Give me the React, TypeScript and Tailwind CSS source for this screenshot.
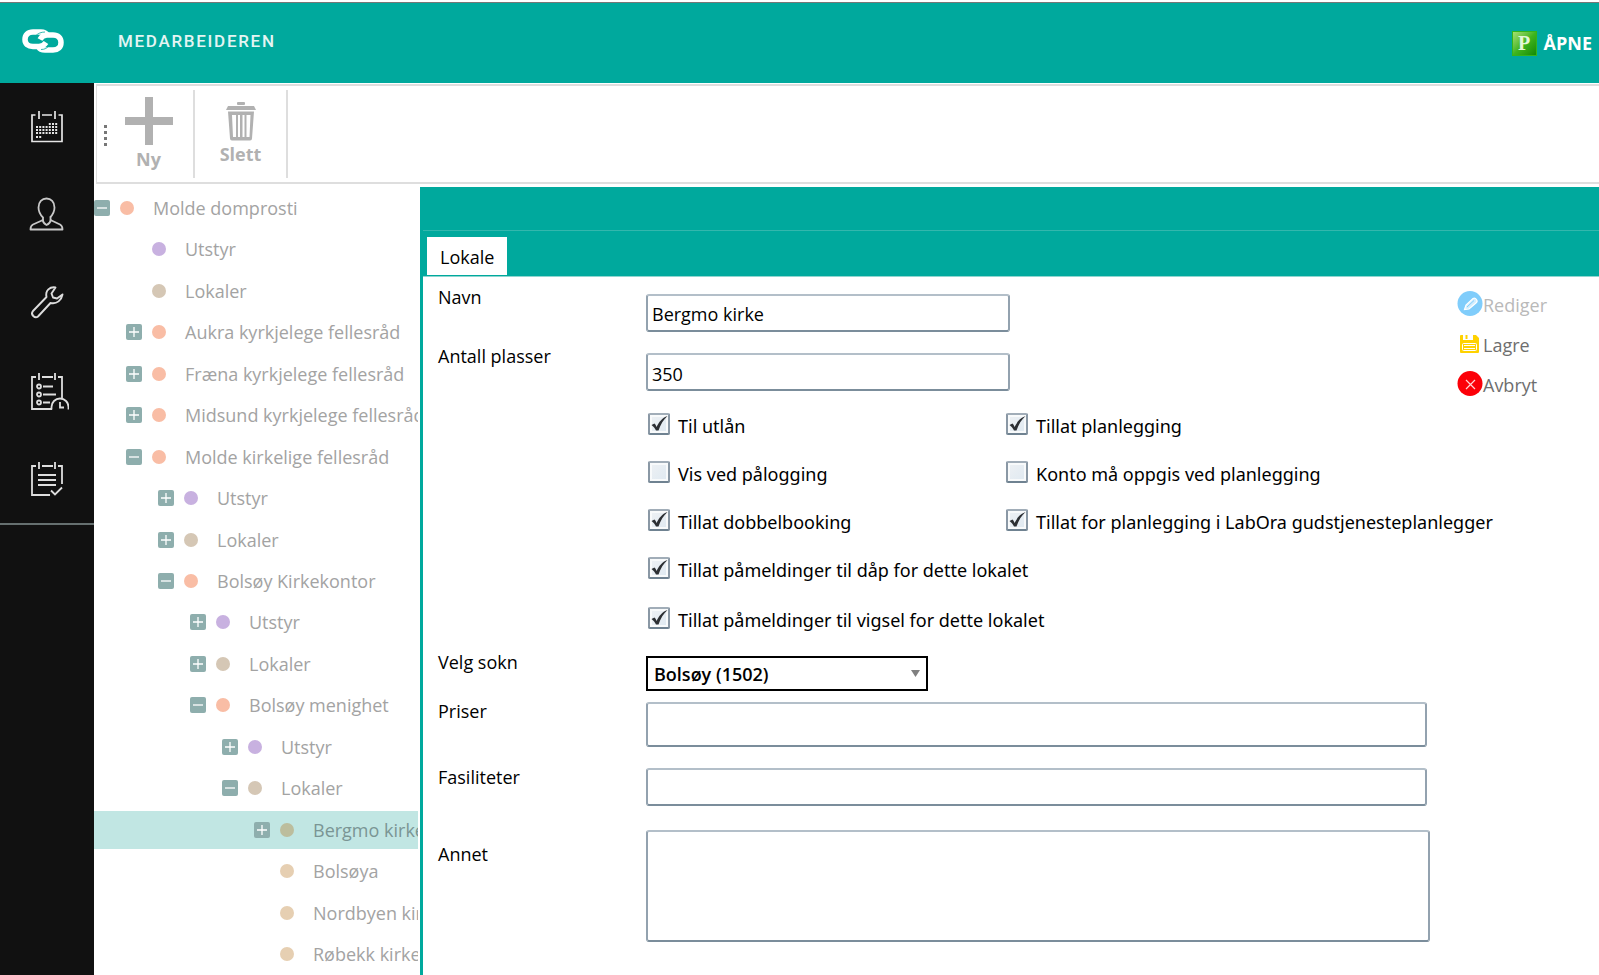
import { useState, type ReactNode } from "react";

type Kind = "office" | "equipment" | "room" | "place" | "active";

interface TreeNode {
    label: string;
    level: number;
    kind: Kind;
    expander?: "plus" | "minus";
}

const nodes: TreeNode[] = [
    { label: "Molde domprosti", level: 0, kind: "office", expander: "minus" },
    { label: "Utstyr", level: 1, kind: "equipment" },
    { label: "Lokaler", level: 1, kind: "room" },
    { label: "Aukra kyrkjelege fellesråd", level: 1, kind: "office", expander: "plus" },
    { label: "Fræna kyrkjelege fellesråd", level: 1, kind: "office", expander: "plus" },
    { label: "Midsund kyrkjelege fellesråd", level: 1, kind: "office", expander: "plus" },
    { label: "Molde kirkelige fellesråd", level: 1, kind: "office", expander: "minus" },
    { label: "Utstyr", level: 2, kind: "equipment", expander: "plus" },
    { label: "Lokaler", level: 2, kind: "room", expander: "plus" },
    { label: "Bolsøy Kirkekontor", level: 2, kind: "office", expander: "minus" },
    { label: "Utstyr", level: 3, kind: "equipment", expander: "plus" },
    { label: "Lokaler", level: 3, kind: "room", expander: "plus" },
    { label: "Bolsøy menighet", level: 3, kind: "office", expander: "minus" },
    { label: "Utstyr", level: 4, kind: "equipment", expander: "plus" },
    { label: "Lokaler", level: 4, kind: "room", expander: "minus" },
    { label: "Bergmo kirke", level: 5, kind: "active", expander: "plus" },
    { label: "Bolsøya", level: 5, kind: "place" },
    { label: "Nordbyen kirkesenter", level: 5, kind: "place" },
    { label: "Røbekk kirke", level: 5, kind: "place" },
];

const dotColors: Record<Kind, string> = {
    office: "bg-[#f9bda5]",
    equipment: "bg-[#c8b1e0]",
    room: "bg-[#d5c7b5]",
    place: "bg-[#e6cfb2]",
    active: "bg-[#bcbd9d]",
};

const inputStyle =
    "block rounded-[3px] border-2 border-t-[#b3bfc9] border-x-[#93a2af] border-b-[#7b8d9b] bg-white px-1 text-black outline-none";

function Logo() {
    return (
        <svg width="42" height="24" viewBox="0 0 42 24" fill="none" stroke="#fff" strokeWidth="5.500">
            <path d="M25 6C24 4 22 3 19 3h-8C6 3 3 6 3 10.500S6 17.500 11 17.500h6c3 0 5-1 7-4" />
            <path d="M17 18.500c1 2 3 2.500 6 2.500h8c5 0 8-3 8-7.500S36 6 31 6h-6c-3 0-5 1-7 4.500" />
            <path d="M14 6.500c2-2 5-3.500 9-3.500M19 20.500c4 0 6-1.500 8.500-4" stroke="#00a99d" strokeWidth="0.800" />
        </svg>
    );
}

function CalendarIcon() {
    const rows = [
        { y: 13, from: 4, to: 6 },
        { y: 16, from: 0, to: 6 },
        { y: 19, from: 0, to: 6 },
        { y: 22, from: 0, to: 6 },
        { y: 26, from: 0, to: 1 },
    ];
    return (
        <svg width="32" height="32" viewBox="0 0 32 32" fill="none" stroke="#e6e6e6" strokeWidth="1.700">
            <path d="M4.500 4H1v26.500h30V4h-3.500M11 4h10M8 0v8M24 0v8" />
            {rows.map((r) =>
                [0, 1, 2, 3, 4, 5, 6]
                    .filter((i) => i >= r.from && i <= r.to)
                    .map((i) => (
                        <rect key={`${r.y}-${i}`} x={5 + i * 3.2} y={r.y - 1} width="2" height="2" fill="#e6e6e6" stroke="none" />
                    ))
            )}
        </svg>
    );
}

function PersonIcon() {
    return (
        <svg width="34" height="34" viewBox="1 0 34 34" className="overflow-visible" fill="none" stroke="#c8c8c8" strokeWidth="1.800" strokeLinejoin="round">
            <path d="M13 19.500c-2.500-2.500-4.500-6-4.500-10C8.500 4 12 .5 16.500.5S24.500 4 24.500 9.500c0 4-2 7.500-4.500 10" />
            <path d="M13 19v3L3 26.500C1 27.500 .5 29 .5 31.500h32c0-2.500-.5-4-2.500-5L20.500 22v-3" />
            <path d="M12.500 21.500c.5 2.500 2 4.500 4 5.500 2.500-1 4-3 4.500-5.500" />
        </svg>
    );
}

function WrenchIcon() {
    return (
        <svg width="34" height="34" viewBox="1 1 34 34" className="overflow-visible" fill="none" stroke="#dcdcdc" strokeWidth="1.900" strokeLinejoin="round">
            <path d="M25.500 2.500c-5.500-1-10.500 3-9 9.500L3 26c-3 3.500 2 8 5 5.500L20.500 18c6.500 1.500 11-3 12-8.500l-5.500 4-4-1-1.500-4z" />
        </svg>
    );
}

function PlanClockIcon() {
    return (
        <svg width="38" height="38" viewBox="0 0 38 38" fill="none" stroke="#dedede" strokeWidth="1.800">
            <path d="M5 5H1v32h20M11 5h11M27 5h4v21M8 1v7M24 1v7" />
            <path d="M12 14.500h10M12 22.500h13M12 30.500h7" />
            <circle cx="8" cy="14.500" r="2" />
            <circle cx="8" cy="22.500" r="2" />
            <circle cx="8" cy="30.500" r="2" />
            <path d="M20.500 37.500v-2.500a8.500 8.500 0 0 1 17 0v2.500M29 30v5.500h4" />
        </svg>
    );
}

function PlanCheckIcon() {
    return (
        <svg width="32" height="36" viewBox="0 0 32 36" fill="none" stroke="#dedede" strokeWidth="1.800">
            <path d="M5 5H1v29h18M11 5h11M27 5h4v18M8 1v7M24 1v7" />
            <path d="M7 14h18M7 19h18M7 24h18" />
            <path d="M20 29.500l4 4 7-7" />
        </svg>
    );
}

function TrashIcon() {
    return (
        <svg width="30" height="40" viewBox="0 0 30 40" fill="#b1b1b1">
            <rect x="11" y="0" width="8" height="3" rx="1" />
            <path d="M2 4h26l2 4H0z" />
            <path
                fillRule="evenodd"
                d="M2 9.500h26l-2 27q0 2-2 2H6q-2 0-2-2zM6 13l1 22h3V13zM12 13v22h2V13zM16.500 13v22h2V13zM20.500 13v22h3l1-22z"
            />
        </svg>
    );
}

const menu = [
    { label: "Kalender", icon: <CalendarIcon /> },
    { label: "Personer", icon: <PersonIcon /> },
    { label: "Verktøy", icon: <WrenchIcon /> },
    { label: "Planlegging", icon: <PlanClockIcon /> },
    { label: "Oppgaver", icon: <PlanCheckIcon /> },
];

function TreeRow({ node }: { node: TreeNode }) {
    const active = node.kind === "active";
    return (
        <li className="flex items-center overflow-hidden">
            <div className={`flex h-[38px] w-full items-center ${active ? "bg-[#c1e6e3] text-[#7a9594]" : "text-[#a3a3a3]"}`}>
                <span className="shrink-0" style={{ width: node.level * 32 }} />
                {node.expander ? (
                    <button aria-label={node.expander === "plus" ? "Utvid" : "Skjul"} className="mr-2.5 size-4 shrink-0 rounded-xs bg-[#8eaead]">
                        <svg width="16" height="16" viewBox="0 0 16 16" stroke="#fff" strokeWidth="1.300">
                            <path d={node.expander === "plus" ? "M3 8h10M8 3v10" : "M3 8h10"} />
                        </svg>
                    </button>
                ) : (
                    <span className="mr-2.5 size-4 shrink-0" />
                )}
                <span className={`mr-[19px] size-3.5 shrink-0 rounded-full ${dotColors[node.kind]}`} />
                <span className="whitespace-nowrap">{node.label}</span>
            </div>
        </li>
    );
}

function Check({ id, label, initial = false }: { id: string; label: string; initial?: boolean }) {
    const [checked, setChecked] = useState(initial);
    return (
        <div className="flex h-12 items-center gap-2">
            <span className="relative size-[22px] shrink-0">
                <input
                    id={id}
                    type="checkbox"
                    checked={checked}
                    onChange={(e) => setChecked(e.target.checked)}
                    className="block size-full appearance-none rounded-xs border-2 border-t-[#a1adb8] border-x-[#8a98a5] border-b-[#6f8291] bg-linear-to-br from-[#eef1f4] to-[#dfe9f1] shadow-[inset_0_0_0_2px_#f8fafb]"
                />
                {checked && (
                    <svg className="pointer-events-none absolute inset-0" width="22" height="22" viewBox="0 0 22 22" fill="#2c2f33">
                        <path d="M3.500 12l3-1.500c1 1 1.500 2 2 3.500C11 9 14 5 19.500 3c-4 3.500-7 8.500-9 14.500H8C7 15.500 5.500 13.500 3.500 12z" />
                    </svg>
                )}
            </span>
            <label htmlFor={id} className="pt-1 font-['Noto_Sans',sans-serif] whitespace-nowrap">
                {label}
            </label>
        </div>
    );
}

function Field({ id, label, className, children }: { id: string; label: string; className: string; children: ReactNode }) {
    return (
        <div className={`grid grid-cols-[208px_1fr] items-start ${className}`}>
            <label htmlFor={id}>{label}</label>
            {children}
        </div>
    );
}

export default function App() {
    return (
        <div className="flex min-h-screen flex-col bg-white font-['Open_Sans','Noto_Sans',sans-serif] text-lg leading-6 text-black">
            <header className="mt-0.5 flex h-[81px] shrink-0 items-center border-t border-[#777] bg-[#00a99d] pr-[7px] text-white">
                <div className="flex w-[94px] shrink-0 pb-1 pl-[22px]">
                    <Logo />
                </div>
                <h1 className="pb-1 pl-6 font-[Roboto,sans-serif] text-[17px] font-medium tracking-widest text-[#e4f5f3]">MEDARBEIDEREN</h1>
                <button className="ml-auto flex items-center gap-[7px] text-lg font-bold">
                    <span className="flex size-[25px] items-center justify-center border border-[#35b51a] bg-linear-to-br from-[#a5e070] via-[#3fb51f] to-[#118a05] font-['Liberation_Serif',serif] text-xl text-[#e2f7d8]">
                        P
                    </span>
                    ÅPNE
                </button>
            </header>

            <div className="flex flex-1">
                <nav className="w-[94px] shrink-0 bg-[#111]">
                    <div className="border-b-2 border-[#667070]">
                        {menu.map((item) => (
                            <button key={item.label} aria-label={item.label} className="flex h-[88px] w-full items-center justify-start pl-[31px]">
                                {item.icon}
                            </button>
                        ))}
                    </div>
                </nav>

                <div className="flex min-w-0 flex-1 flex-col">
                    {/* Toolbar */}
                    <div className="mt-px mb-[3px] ml-0.5 flex h-[100px] shrink-0 border-y-2 border-l border-[#dedede] py-1 font-bold text-[#b1b1b1]">
                        <div className="flex w-[13px] flex-col items-end justify-center gap-[3px] pt-0.5 pr-[3px]">
                            <span className="size-[3px] bg-[#777]" />
                            <span className="size-[3px] bg-[#777]" />
                            <span className="size-[3px] bg-[#777]" />
                            <span className="size-[3px] bg-[#777]" />
                        </div>
                        <button className="flex w-[85px] flex-col items-center border-r-2 border-[#dedede] pt-[7px] pr-1.5">
                            <svg width="48" height="48" viewBox="0 0 48 48" fill="#b1b1b1">
                                <path d="M20 0h8v20h20v8H28v20h-8V28H0v-8h20z" />
                            </svg>
                            <span className="mt-0.5">Ny</span>
                        </button>
                        <button className="flex w-[93px] flex-col items-center border-r-2 border-[#dedede] pt-3">
                            <TrashIcon />
                            <span>Slett</span>
                        </button>
                    </div>

                    <div className="flex flex-1">
                        <ul className="mr-0.5 grid w-[324px] shrink-0 auto-rows-fr overflow-hidden">
                            {nodes.map((node, i) => (
                                <TreeRow key={i} node={node} />
                            ))}
                        </ul>

                        <main className="flex min-w-0 flex-1 flex-col border-l-3 border-[#00a99d]">
                            <div className="h-11 border-b border-[#33b7ad] bg-[#00a99d]" />
                            <div className="flex bg-[#00a99d] pt-[6px] pb-px pl-1">
                                <button className="h-[38px] bg-white px-[13px] pt-0.5">Lokale</button>
                            </div>

                            <div className="flex flex-1 border-t border-[#8fd6d0]">
                                <form className="min-w-0 flex-1 pt-2 pl-[15px]">
                                    <Field id="navn" label="Navn" className="pr-[30px]">
                                        <input id="navn" defaultValue="Bergmo kirke" className={`${inputStyle} mt-[9px] h-[38px] w-[364px] pt-0.5`} />
                                    </Field>
                                    <Field id="plasser" label="Antall plasser" className="mt-3 pr-[30px]">
                                        <input id="plasser" defaultValue="350" className={`${inputStyle} mt-[9px] h-[38px] w-[364px] pt-1`} />
                                    </Field>

                                    <div className="mt-[9px] ml-[210px] grid grid-cols-[358px_1fr]">
                                        <Check id="utlan" label="Til utlån" initial />
                                        <Check id="planlegging" label="Tillat planlegging" initial />
                                        <Check id="palogging" label="Vis ved pålogging" />
                                        <Check id="konto" label="Konto må oppgis ved planlegging" />
                                        <Check id="dobbel" label="Tillat dobbelbooking" initial />
                                        <Check id="labora" label="Tillat for planlegging i LabOra gudstjenesteplanlegger" initial />
                                    </div>
                                    <div className="ml-[210px] flex flex-col gap-0.5">
                                        <Check id="dap" label="Tillat påmeldinger til dåp for dette lokalet" initial />
                                        <Check id="vigsel" label="Tillat påmeldinger til vigsel for dette lokalet" initial />
                                    </div>

                                    <Field id="sokn" label="Velg sokn" className="mt-2 pr-[30px]">
                                        <div className="relative mt-[6px] w-[282px]">
                                            <select id="sokn" className="block h-[35px] w-full appearance-none border-2 border-black bg-white px-[6px] font-semibold outline-none">
                                                <option>Bolsøy (1502)</option>
                                            </select>
                                            <svg className="pointer-events-none absolute top-[14px] right-2" width="9" height="7" viewBox="0 0 9 7" fill="#808080">
                                                <path d="M0 0h9L4.500 7z" />
                                            </svg>
                                        </div>
                                    </Field>
                                    <Field id="priser" label="Priser" className="mt-2 pr-[30px]">
                                        <input id="priser" className={`${inputStyle} mt-[3px] h-[45px] w-full`} />
                                    </Field>
                                    <Field id="fasiliteter" label="Fasiliteter" className="mt-[18px] pr-[30px]">
                                        <input id="fasiliteter" className={`${inputStyle} mt-[3px] h-[38px] w-full`} />
                                    </Field>
                                    <Field id="annet" label="Annet" className="mt-6 pr-[27px] [&>label]:pt-3">
                                        <textarea id="annet" className={`${inputStyle} h-28 w-full resize-none`} />
                                    </Field>
                                </form>

                                <div className="flex w-[142px] shrink-0 flex-col items-start gap-4 pt-4 text-[#6e6e6e]">
                                    <button className="flex items-center text-[#b9b9b9]">
                                        <svg width="26" height="24" viewBox="0 0 26 24" className="overflow-visible" fill="none" stroke="#fff">
                                            <circle cx="13" cy="10.500" r="12.500" fill="#80cdfb" stroke="none" />
                                            <path d="M7.500 16.500l1.500-4.500 7-6.500q2-1 3.500 1t-.5 3.500l-7 6z" fill="#d3eefe" strokeWidth="1.200" />
                                            <path d="M10 14l7-6.500" stroke="#80cdfb" />
                                        </svg>
                                        Rediger
                                    </button>
                                    <button className="flex items-center">
                                        <svg width="26" height="24" viewBox="0 0 26 24">
                                            <path d="M3 3q0-1 1-1h2v5h10V2h3l3 3v14q0 1-1 1H4q-1 0-1-1z" fill="#ffd200" />
                                            <path d="M8.500 2h2v4h-2z" fill="#ffd200" />
                                            <rect x="5.500" y="10.500" width="14" height="7" rx="1" fill="#ffd200" stroke="#fff" />
                                            <path d="M7 12.500h11M7 15.500h11" stroke="#fff" strokeWidth="1.200" />
                                        </svg>
                                        Lagre
                                    </button>
                                    <button className="flex items-center">
                                        <svg width="26" height="24" viewBox="0 0 26 24" className="overflow-visible">
                                            <circle cx="13" cy="10.500" r="12.500" fill="#fc0008" />
                                            <path d="M9 7l9 9M18 7l-9 9" stroke="#ffd5d5" strokeWidth="1.200" />
                                        </svg>
                                        Avbryt
                                    </button>
                                </div>
                            </div>
                        </main>
                    </div>
                </div>
            </div>
        </div>
    );
}
